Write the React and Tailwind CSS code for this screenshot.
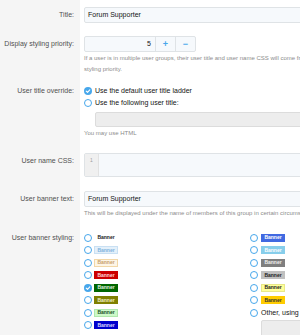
import React from "react";

const Radio = ({ checked }) =>
  checked ? (
    <span className="w-[8px] h-[8px] rounded-full bg-[#47a7eb] flex items-center justify-center shrink-0">
      <svg width="6" height="6" viewBox="0 0 10 10">
        <path d="M2 5.2 L4.2 7.3 L8 3" stroke="white" strokeWidth="1.8" fill="none" strokeLinecap="round" strokeLinejoin="round" />
      </svg>
    </span>
  ) : (
    <span className="w-[8px] h-[8px] rounded-full border-[1.3px] border-[#47a7eb] bg-white shrink-0" />
  );

const Banner = ({ cls }) => (
  <span className={"w-[24px] h-[8px] flex items-center justify-center text-[5px] font-bold leading-none " + cls}>
    Banner
  </span>
);

const leftBanners = [
  { cls: "text-[#222]", checked: false },
  { cls: "bg-[#e4f0fa] text-[#7fb2dc] border-[0.5px] border-[#c9e0f3]", checked: false },
  { cls: "bg-[#fdf5e6] text-[#c9a06a] border-[0.5px] border-[#f2d7a7]", checked: false },
  { cls: "bg-[#cc0000] text-[#ffd8d8]", checked: false },
  { cls: "bg-[#006600] text-[#e0f0e0]", checked: true },
  { cls: "bg-[#808000] text-[#f0f0c8]", checked: false },
  { cls: "bg-[#ccf9c8] text-[#1c4f1c] border-[0.5px] border-[#b0e8ac]", checked: false },
  { cls: "bg-[#0000cc] text-[#dcdcff]", checked: false },
];

const rightBanners = [
  "bg-[#4169e1] text-white",
  "bg-[#87ceeb] text-white",
  "bg-[#7f7f7f] text-[#eeeeee]",
  "bg-[#c0c0c0] text-[#222]",
  "bg-[#ffff99] text-[#222] border-[0.5px] border-[#e8e88a]",
  "bg-[#ffcc00] text-[#333]",
];

const Label = ({ children, className = "" }) => (
  <div className={"w-[80px] shrink-0 bg-[#f5f5f5] text-right pr-[6px] text-[7px] text-[#505050] whitespace-nowrap " + className}>
    {children}
  </div>
);

export default function App() {
  return (
    <div
      className="w-[300px] h-[335px] overflow-hidden bg-white"
      style={{ fontFamily: '"Liberation Sans", Arial, sans-serif' }}
    >
      <div className="w-[700px] flex flex-col">
        {/* Title */}
        <div className="flex">
          <Label className="pt-[7px] leading-[16px]">Title:</Label>
          <div className="flex-1 pl-[4px] pt-[7px]">
            <div className="h-[16px] border border-[#dfe3e6] bg-[#f6f9fc] rounded-[2px] flex items-center px-[3px] text-[7px] text-[#141414]">
              Forum Supporter
            </div>
          </div>
        </div>

        {/* Display styling priority */}
        <div className="flex">
          <Label className="pt-[13px] leading-[16px]">Display styling priority:</Label>
          <div className="flex-1 pl-[4px] pt-[13px]">
            <div className="flex h-[16px] w-[112px] border border-[#dfe3e6] rounded-[2px] bg-[#f6f9fc]">
              <div className="w-[70px] flex items-center justify-end pr-[4px] text-[7px] text-[#141414]">5</div>
              <div className="w-[20px] border-l border-[#dfe3e6] flex items-center justify-center text-[#47a7eb] text-[9px] font-bold leading-none">+</div>
              <div className="flex-1 border-l border-[#dfe3e6] flex items-center justify-center text-[#47a7eb] text-[9px] font-bold leading-none">−</div>
            </div>
            <div className="mt-[1px] text-[6px] leading-[11px] text-[#8c8c8c] whitespace-nowrap">
              <div>If a user is in multiple user groups, their user title and user name CSS will come from the group with the highest display</div>
              <div>styling priority.</div>
            </div>
          </div>
        </div>

        {/* User title override */}
        <div className="flex">
          <Label className="pt-[10px] leading-[12px]">User title override:</Label>
          <div className="flex-1 pl-[4px] pt-[10px]">
            <div className="h-[12px] flex items-center gap-[3px] text-[7px] text-[#141414]">
              <Radio checked />
              <span>Use the default user title ladder</span>
            </div>
            <div className="h-[12px] flex items-center gap-[3px] text-[7px] text-[#141414]">
              <Radio />
              <span>Use the following user title:</span>
            </div>
            <div className="ml-[11px] mt-[3px] h-[15px] border border-[#dcdcdc] bg-[#ededed] rounded-[2px]" />
            <div className="mt-[1px] text-[6px] leading-[10px] text-[#8c8c8c]">You may use HTML</div>
          </div>
        </div>

        {/* User name CSS */}
        <div className="flex">
          <Label className="pt-[15px] leading-[16px]">User name CSS:</Label>
          <div className="flex-1 pl-[4px] pt-[15px]">
            <div className="h-[24px] border border-[#dfe3e6] rounded-[2px] flex bg-[#f6f9fc]">
              <div className="w-[14px] bg-[#f0f0f0] border-r border-[#e2e2e2] text-[5px] text-[#a0a0a0] text-center pt-[2px] leading-[8px]">1</div>
              <div className="flex-1" />
            </div>
          </div>
        </div>

        {/* User banner text */}
        <div className="flex">
          <Label className="pt-[14px] leading-[16px]">User banner text:</Label>
          <div className="flex-1 pl-[4px] pt-[14px]">
            <div className="h-[16px] border border-[#dfe3e6] bg-[#f6f9fc] rounded-[2px] flex items-center px-[3px] text-[7px] text-[#141414]">
              Forum Supporter
            </div>
            <div className="mt-[1px] text-[6px] leading-[10px] text-[#8c8c8c] whitespace-nowrap">
              This will be displayed under the name of members of this group in certain circumstances.
            </div>
          </div>
        </div>

        {/* User banner styling */}
        <div className="flex h-[120px]">
          <Label className="pt-[13.5px] leading-[12.5px]">User banner styling:</Label>
          <div className="flex-1 pl-[4px] pt-[13.5px] grid grid-cols-[166px_200px]">
            <div className="flex flex-col">
              {leftBanners.map((b, i) => (
                <div key={i} className="h-[12.5px] flex items-center gap-[2px]">
                  <Radio checked={b.checked} />
                  <Banner cls={b.cls} />
                </div>
              ))}
            </div>
            <div className="flex flex-col">
              {rightBanners.map((c, i) => (
                <div key={i} className="h-[12.5px] flex items-center gap-[3px]">
                  <Radio />
                  <Banner cls={c} />
                </div>
              ))}
              <div className="h-[12.5px] flex items-center gap-[3px] text-[7px] text-[#141414]">
                <Radio />
                <span>Other, using custom CSS class name:</span>
              </div>
              <div className="ml-[11px] mt-[1px] h-[30px] border border-[#dcdcdc] bg-[#ededed] rounded-[2px]" />
            </div>
          </div>
        </div>
      </div>
    </div>
  );
}
